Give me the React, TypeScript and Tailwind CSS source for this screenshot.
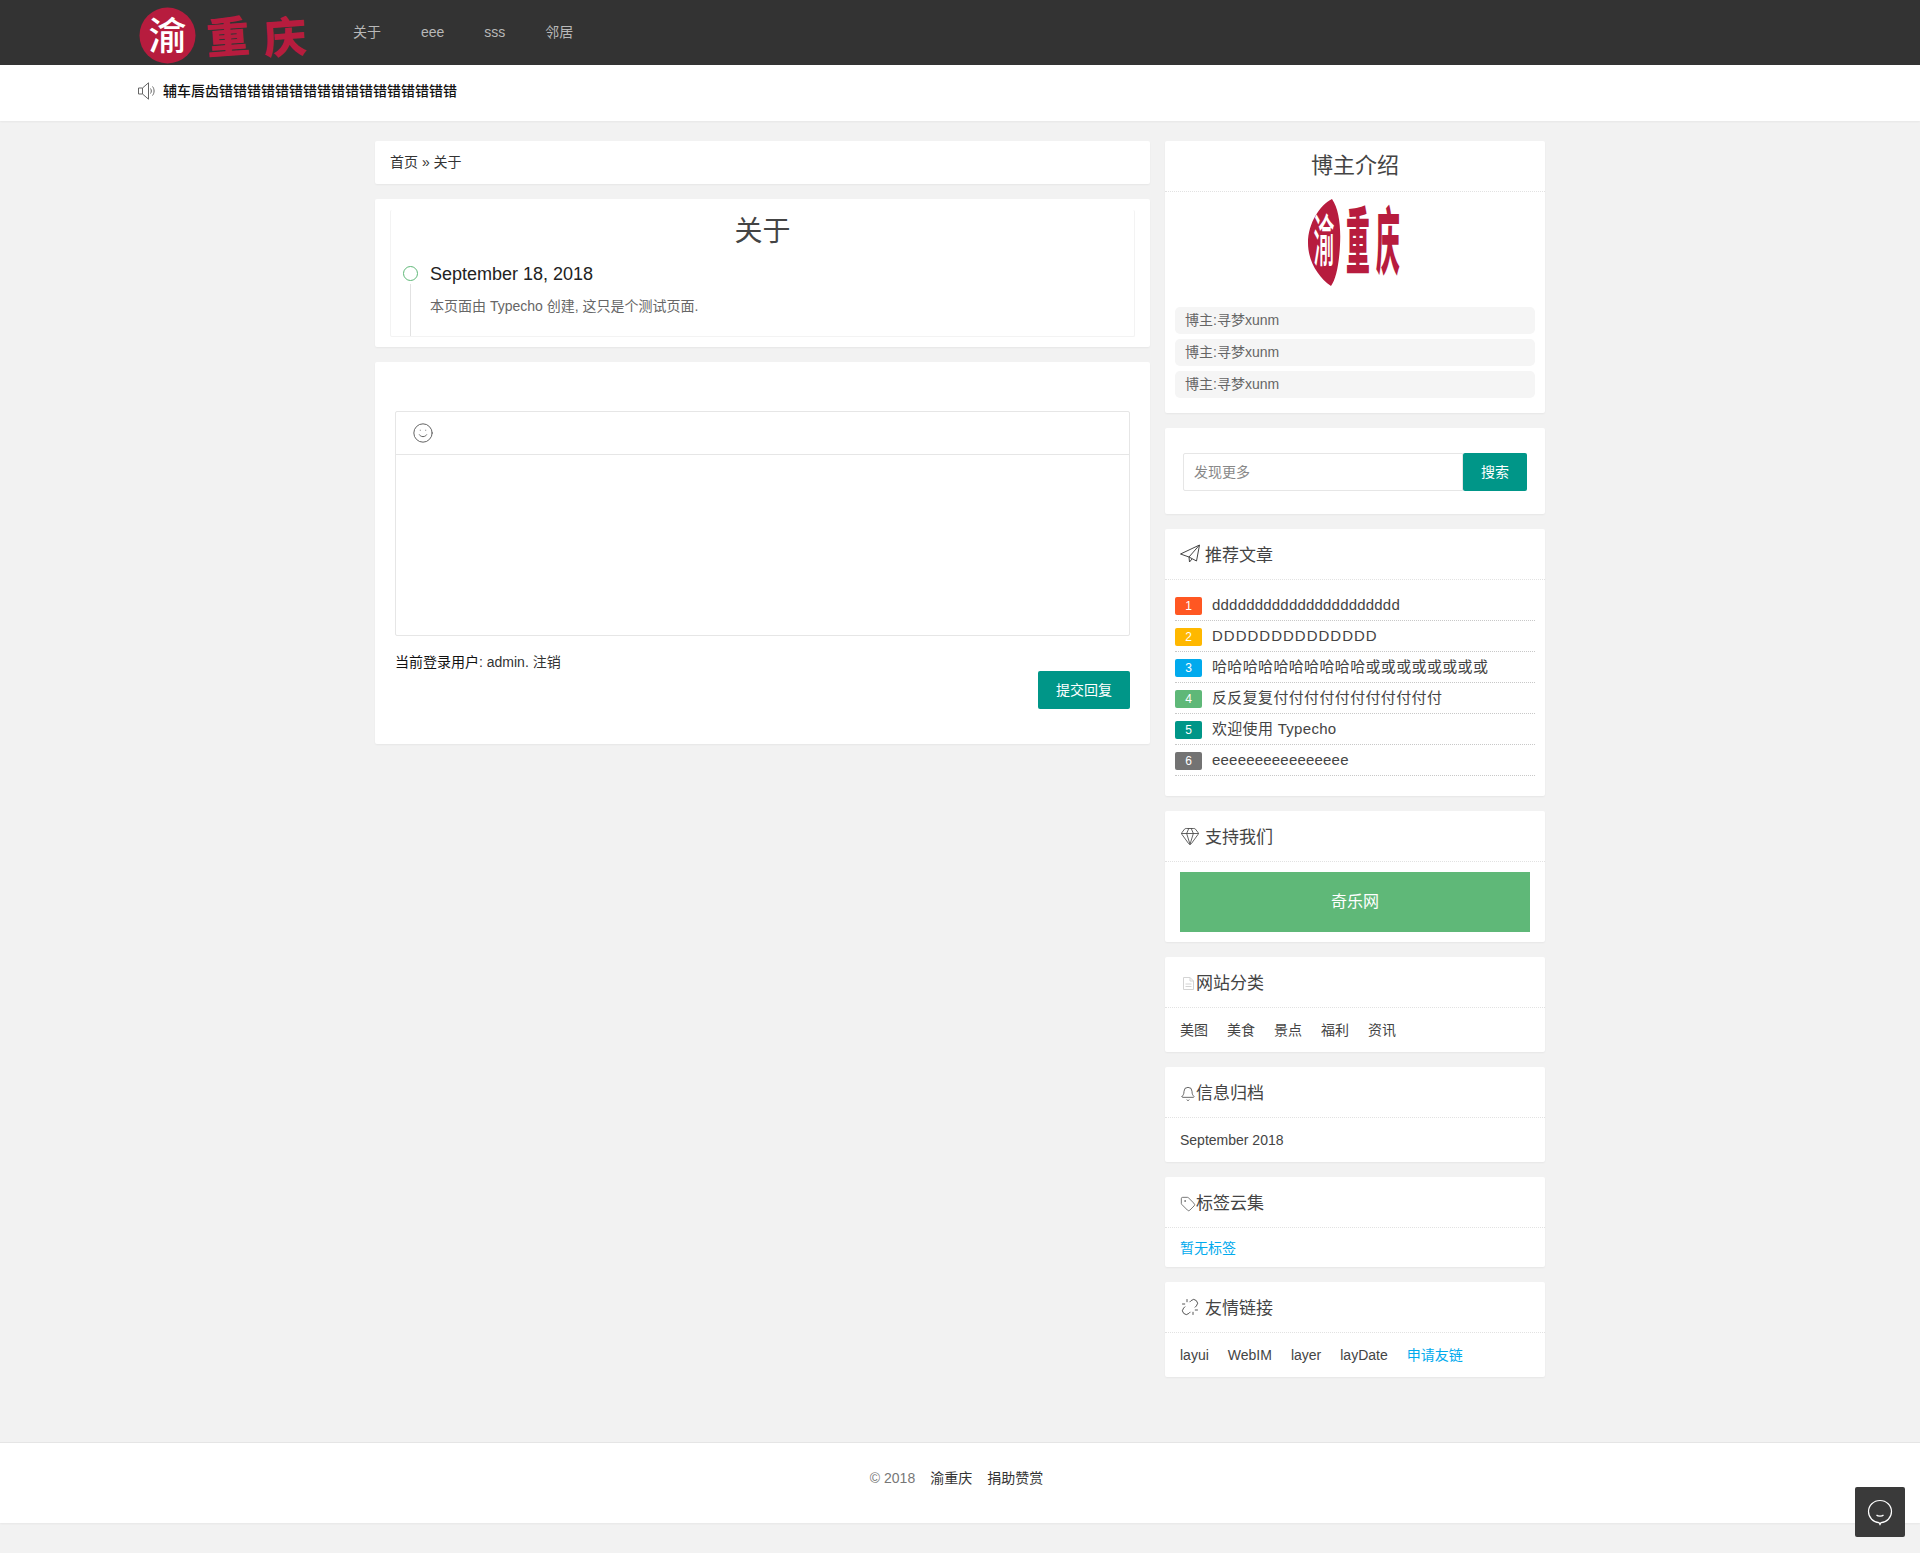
import type { ReactNode } from "react";
import { Bell, Gem, Smile, Tag, Unlink } from "lucide-react";

const navItems = ["关于", "eee", "sss", "邻居"];

const ranked = [
  { text: "dddddddddddddddddddddd", color: "bg-[#FF5722]", spacing: "tracking-[0.2px]" },
  { text: "DDDDDDDDDDDDDD", color: "bg-[#FFB800]", spacing: "tracking-[1px]" },
  { text: "哈哈哈哈哈哈哈哈哈哈或或或或或或或或", color: "bg-[#01AAED]", spacing: "tracking-[0.35px]" },
  { text: "反反复复付付付付付付付付付付付", color: "bg-[#5FB878]", spacing: "tracking-[0.35px]" },
  { text: "欢迎使用 Typecho", color: "bg-[#009688]", spacing: "tracking-[0.3px]" },
  { text: "eeeeeeeeeeeeeeee", color: "bg-[#737373]", spacing: "tracking-[0.2px]" },
];

function HeaderLogo() {
  return (
    <svg width="172" height="57" viewBox="0 0 172 57" className="mt-[7px] block self-start">
      <circle cx="28.5" cy="28.5" r="28" fill="#b71c3e" />
      <text x="28.5" y="42" textAnchor="middle" fontSize="38" fontWeight="500" fill="#fff">
        渝
      </text>
      <text x="67" y="46" fontSize="43" fontWeight="900" fill="#b71c3e" transform="rotate(-4 88 28)">
        重
      </text>
      <text x="124" y="46" fontSize="43" fontWeight="900" fill="#b71c3e" transform="rotate(-4 146 28)">
        庆
      </text>
    </svg>
  );
}

function AboutLogo() {
  return (
    <svg width="92" height="88" viewBox="0 0 92 88" className="block">
      <path d="M24 0 C31 10 33 28 32 46 C31 66 28 80 23 87 C10 78 0 62 0 44 C0 24 12 6 24 0 Z" fill="#b71c3e" />
      <text transform="translate(16 62) scale(0.7 1.85)" textAnchor="middle" fontSize="30" fontWeight="500" fill="#fff">
        渝
      </text>
      <text transform="translate(38 69) scale(0.85 2.6)" fontSize="28" fontWeight="900" fill="#b71c3e">
        重
      </text>
      <text transform="translate(68 69) scale(0.85 2.6)" fontSize="28" fontWeight="900" fill="#b71c3e">
        庆
      </text>
    </svg>
  );
}

function Card({ children, className = "" }: { children: ReactNode; className?: string }) {
  return <div className={`rounded-[2px] bg-white shadow-[0_1px_2px_rgba(0,0,0,0.05)] ${className}`}>{children}</div>;
}

function CardTitle({ icon, children }: { icon: ReactNode; children: ReactNode }) {
  return (
    <div className="flex h-[51px] items-center border-b border-dotted border-[#e2e2e2] pt-[3px] pl-[15px] text-[17px] text-[#444]">
      {icon}
      {children}
    </div>
  );
}

function LinkRow({ items }: { items: string[] }) {
  return (
    <div className="flex h-[44px] items-center gap-[19px] pl-[15px] text-[14px] text-[#444]">
      {items.map((item) => (
        <span key={item}>{item}</span>
      ))}
      <span className="text-[#01AAED]">申请友链</span>
    </div>
  );
}

export default function App() {
  return (
    <div className="min-h-[1553px] bg-[#f2f2f2] font-['Liberation_Sans','Noto_Sans_CJK_SC',sans-serif] text-[14px] text-[#333]">
      <header className="flex h-[65px] items-center bg-[#333] pl-[139px]">
        <HeaderLogo />
        <nav className="ml-[42px] flex gap-10 text-[14px] text-[#b8b8b8]">
          {navItems.map((item) => (
            <span key={item}>{item}</span>
          ))}
        </nav>
      </header>

      <div className="flex h-[56px] items-center gap-[7px] bg-white pb-[4px] pl-[138px] shadow-[0_1px_2px_rgba(0,0,0,0.05)]">
        <svg width="18" height="18" viewBox="0 0 18 18" fill="none" stroke="#666" strokeWidth="1">
          <path d="M0.5 6 H4.5 L10.5 0.8 V17.2 L4.5 12 H0.5 Z" />
          <path d="M4.5 6 V12" />
          <path d="M12.5 6.5 C13.6 8 13.6 10 12.5 11.5" />
          <path d="M14.5 4.5 C16.6 7 16.6 11 14.5 13.5" />
        </svg>
        <span className="font-medium text-[#111]">辅车唇齿错错错错错错错错错错错错错错错错错</span>
      </div>

      <main className="mx-auto mt-5 flex w-[1170px] items-start gap-[15px]">
        <div className="flex w-[775px] flex-col gap-[15px]">
          <Card className="flex h-[43px] items-center pl-[15px]">首页 » 关于</Card>

          <Card className="px-[15px] pt-[11px] pb-[10px]">
            <div className="h-[127px] rounded-[2px] border-x border-b border-[#f3f3f3]">
              <h1 className="h-[40px] text-center text-[28px] leading-[44px] text-[#444]">关于</h1>
              <div className="mt-[14px] flex h-[72px] pl-[12px]">
                <div className="flex w-[15px] flex-col items-center pt-[2px]">
                  <span className="h-[15px] w-[15px] shrink-0 rounded-full border border-[#5FB878]" />
                  <span className="mt-[3px] w-px flex-1 bg-[#e2e2e2]" />
                </div>
                <div className="ml-3">
                  <div className="h-5 text-[18px] leading-5 text-[#222]">September 18, 2018</div>
                  <p className="mt-[12px] leading-5 text-[#666]">本页面由 Typecho 创建, 这只是个测试页面.</p>
                </div>
              </div>
            </div>
          </Card>

          <Card className="h-[382px] px-5 pt-[49px]">
            <div className="rounded-[2px] border border-[#e6e6e6]">
              <div className="flex h-[43px] items-center border-b border-[#e6e6e6] pl-[16px]">
                <Smile size={22} strokeWidth={1} className="text-[#555]" />
              </div>
              <div className="h-[180px]" />
            </div>
            <p className="mt-[16px] leading-5">
              <span className="text-[#111]">当前登录用户</span>: admin. 注销
            </p>
            <div className="-mt-px flex justify-end">
              <button className="h-[38px] rounded-[2px] bg-[#009688] px-[18px] text-[14px] text-white">提交回复</button>
            </div>
          </Card>
        </div>

        <aside className="flex w-[380px] flex-col gap-[15px]">
          <Card className="pb-[15px]">
            <h2 className="h-[51px] border-b border-dotted border-[#e2e2e2] text-center text-[22px] leading-[50px] text-[#444]">
              博主介绍
            </h2>
            <div className="flex h-[115px] justify-center pt-[7px] pr-[3px]">
              <AboutLogo />
            </div>
            <div className="flex flex-col gap-[5px] px-[10px]">
              {[0, 1, 2].map((row) => (
                <div key={row} className="h-[27px] rounded-[5px] bg-[#f5f5f5] pl-[10px] leading-[27px] text-[#666]">
                  博主:寻梦xunm
                </div>
              ))}
            </div>
          </Card>

          <Card className="flex h-[86px] items-start px-[18px] pt-[25px]">
            <input
              placeholder="发现更多"
              className="h-[38px] w-[280px] rounded-l-[2px] border border-[#e6e6e6] pl-[10px] text-[14px] outline-none placeholder:text-[#888]"
            />
            <button className="h-[38px] w-[64px] rounded-[2px] bg-[#009688] text-[14px] text-white">搜索</button>
          </Card>

          <Card className="pb-[20px]">
            <CardTitle
              icon={
                <svg width="20" height="20" viewBox="0 0 20 20" fill="none" stroke="#444" strokeWidth="1" className="mr-[5px] -mt-[4px]">
                  <path d="M0.5 10 L19.5 1 L16.5 17 L9 13 Z" />
                  <path d="M19.5 1 L9 13 L9.5 18 L12 15" />
                </svg>
              }
            >
              推荐文章
            </CardTitle>
            <ul className="px-[10px] pt-[10px]">
              {ranked.map((item, i) => (
                <li key={i} className="flex h-[31px] items-start border-b border-dotted border-[#c8c8c8] pt-[7px]">
                  <span className={`h-[18px] w-[27px] rounded-[2px] text-center text-[12px] leading-[18px] text-white ${item.color}`}>
                    {i + 1}
                  </span>
                  <span className={`ml-[10px] text-[15px] leading-[15px] text-[#444] ${item.spacing}`}>{item.text}</span>
                </li>
              ))}
            </ul>
          </Card>

          <Card className="pb-[10px]">
            <CardTitle icon={<Gem size={20} strokeWidth={1} className="mr-[5px] -mt-[4px] text-[#444]" />}>支持我们</CardTitle>
            <div className="mx-[15px] mt-[10px] h-[60px] bg-[#5FB878] text-center text-[16px] leading-[60px] text-white">
              奇乐网
            </div>
          </Card>

          <Card>
            <CardTitle
              icon={
                <svg width="11" height="13" viewBox="0 0 11 13" fill="none" stroke="#d4d4d4" strokeWidth="1" className="mr-[2px] ml-[3px]">
                  <path d="M0.5 0.5 H7 L10.5 4 V12.5 H0.5 Z" />
                  <path d="M7 0.5 V4 H10.5" />
                  <path d="M2.5 7 H8.5 M2.5 9.5 H8.5" />
                </svg>
              }
            >
              网站分类
            </CardTitle>
            <div className="flex h-[44px] items-center gap-[19px] pl-[15px] text-[#444]">
              {["美图", "美食", "景点", "福利", "资讯"].map((item) => (
                <span key={item}>{item}</span>
              ))}
            </div>
          </Card>

          <Card>
            <CardTitle icon={<Bell size={16} strokeWidth={1.2} className="text-[#444]" />}>信息归档</CardTitle>
            <div className="flex h-[44px] items-center pl-[15px] text-[#444]">September 2018</div>
          </Card>

          <Card>
            <CardTitle icon={<Tag size={16} strokeWidth={1.2} className="text-[#555]" />}>标签云集</CardTitle>
            <div className="flex h-[39px] items-center pt-[1px] pl-[15px] text-[#01AAED]">暂无标签</div>
          </Card>

          <Card>
            <CardTitle icon={<Unlink size={18} strokeWidth={1.2} className="mr-[6px] ml-[1px] -mt-[4px] text-[#444]" />}>友情链接</CardTitle>
            <LinkRow items={["layui", "WebIM", "layer", "layDate"]} />
          </Card>
        </aside>
      </main>

      <footer className="mt-[65px] flex h-[81px] items-center justify-center gap-[15px] border-t border-[#e5e5e5] bg-white pr-[7px] pb-[10px] shadow-[0_1px_2px_rgba(0,0,0,0.05)]">
        <span className="text-[#777]">© 2018</span>
        <span className="text-[#333]">渝重庆</span>
        <span className="text-[#333]">捐助赞赏</span>
      </footer>

      <div className="fixed right-[15px] bottom-[16px] flex h-[50px] w-[50px] items-center justify-center rounded-[2px] bg-[#3a3a3a]">
        <svg width="26" height="27" viewBox="0 0 26 27" fill="none" stroke="#fff" strokeWidth="1.2">
          <path d="M13 1.5 C6.6 1.5 1.5 6.4 1.5 12.6 C1.5 18.6 6.3 23.4 12 23.7 L13 25.5 L14 23.7 C19.7 23.4 24.5 18.6 24.5 12.6 C24.5 6.4 19.4 1.5 13 1.5 Z" />
          <path d="M9.5 16 C11 17.6 15 17.6 16.5 16" />
        </svg>
      </div>
    </div>
  );
}
